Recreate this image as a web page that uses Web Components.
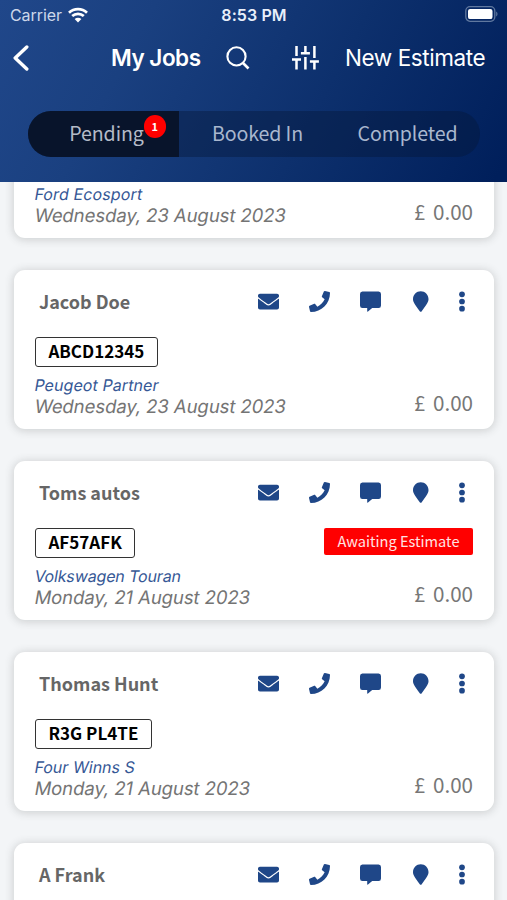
<!DOCTYPE html>
<html lang="en">
<head>
<meta charset="utf-8">
<title>My Jobs</title>
<style>
html, body { margin: 0; height: 900px; overflow: hidden; background: #f3f5f7; font-family: Inter, "Liberation Sans", sans-serif; }
</style>
</head>
<body>
<jobs-app></jobs-app>
<script>
const define = (name, html) => customElements.define(name, class extends HTMLElement {
  constructor() {
    super();
    const t = document.createElement('template');
    t.innerHTML = html;
    this.attachShadow({ mode: 'open' }).append(t.content.cloneNode(true));
  }
});

define('status-bar', `
<style>
:host { display: grid; grid-template-columns: 1fr auto 1fr; align-items: center; height: 29px; padding: 0 9px 0 10px; color: #fff; font-size: 16px; line-height: 30px; }
.left { display: flex; align-items: center; gap: 6.5px; color: #ccd7ea; letter-spacing: -.08px; }
.time { font-weight: 600; letter-spacing: .1px; color: #e8effa; }
.battery { justify-self: end; margin-top: -2px; }
svg { display: block; }
</style>
<div class="left"><span>Carrier</span>
<svg width="20" height="16" viewBox="0 0 20 16" fill="none" stroke="#fff" stroke-width="2.7"><path d="M1 5.7C6 .9 14 .9 19 5.7M4.2 9.1c3.3-3.1 8.3-3.1 11.6 0"/><path d="M6.6 12c2-1.8 4.8-1.8 6.8 0L10 15.4z" fill="#fff" stroke="none"/></svg></div>
<span class="time">8:53 PM</span>
<svg class="battery" width="33" height="16" viewBox="0 0 33 16"><rect x=".8" y=".7" width="29" height="14.6" rx="4.2" fill="none" stroke="#60789f" stroke-width="1.3"/><rect x="3" y="2.9" width="24.5" height="10.2" rx="2.2" fill="#fff"/><path d="M31.2 5.5c1.7.8 1.7 4.2 0 5z" fill="#60789f"/></svg>
`);

define('nav-bar', `
<style>
:host { display: grid; grid-template-columns: 111px 115px 66px 53px 1fr; align-items: center; height: 58px; color: #fff; line-height: 30px; white-space: nowrap; }
.back { margin-left: 11px; }
.title { font-size: 22.5px; font-weight: 600; letter-spacing: -.5px; }
.new { font-size: 22.5px; letter-spacing: -.42px; }
svg { display: block; fill: none; stroke: #fff; }
</style>
<svg class="back" width="18" height="28" viewBox="0 0 18 28" stroke-width="3.4" stroke-linecap="round" stroke-linejoin="round"><path d="M15.8 3 4.2 14l11.6 11"/></svg>
<span class="title">My Jobs</span>
<svg width="24" height="24" viewBox="0 0 24 24" stroke-width="2.1"><circle cx="10.5" cy="10.4" r="9.1"/><path d="m17 17 5.5 5.5" stroke-width="2.7"/></svg>
<svg width="27" height="24" viewBox="0 0 27 24" stroke-width="2.5"><path d="M4.5 0v10M0 13.6h9M4.500 13.6v10M13.4 0v7M8.9 7.3h9M13.4 11v12.6M22.4 0v12M17.9 15.6h9M22.4 15.6v8"/></svg>
<span class="new">New Estimate</span>
`);

define('job-tab', `
<style>
:host { display: flex; align-items: center; justify-content: center; position: relative; font: 400 19.6px/44px "Noto Sans CJK SC", sans-serif; color: #a9b7ce; padding-bottom: 3px; height: 43px; letter-spacing: -.12px; }
:host([active]) { background: #08142b; padding-left: 6px; color: #b4bbc7; }
::slotted([slot=badge]) { position: absolute; left: 115.5px; top: 4px; width: 22.5px; height: 22.5px; border-radius: 50%; background: #f00; color: #fff; text-align: center; font: 700 11px/22px "Noto Sans CJK SC", sans-serif; letter-spacing: 0; }
</style>
<slot></slot><slot name="badge"></slot>
`);

define('tab-strip', `
<style>
:host { display: grid; grid-template-columns: 151px 157px 143px; margin: 24px 0 0 28px; width: 452px; height: 46px; border-radius: 23px; overflow: hidden; background: rgba(4,22,55,.4); }
</style>
<slot></slot>
`);

define('app-header', `
<style>
:host { display: block; position: relative; z-index: 1; height: 181.5px; background: linear-gradient(118deg, #20478a 0%, #1a4080 26%, #0d306d 62%, #001f5b 98%); }
</style>
<slot></slot>
`);

define('reg-plate', `
<style>
:host { box-sizing: border-box; display: inline-block; height: 30px; padding: 0 12.4px; border: 1.5px solid #333; border-radius: 3px; color: #000; background: #fff; font: 700 17px/26px "Noto Sans CJK SC", sans-serif; white-space: nowrap; }
</style>
<slot></slot>
`);

define('status-tag', `
<style>
:host { display: block; box-sizing: border-box; width: 149px; height: 26.5px; border-radius: 2px; background: #f00; color: #ffe3e3; text-align: center; font: 400 14.6px/25px "Noto Sans CJK SC", sans-serif; }
</style>
<slot></slot>
`);

define('job-actions', `
<style>
:host { display: grid; grid-template-columns: repeat(5, auto); align-items: center; fill: #1f4788; height: 22px; }
svg { display: block; }
.mail { margin-right: 30px; } .call { margin-right: 30px; } .chat { margin-right: 32.5px; } .pin { margin-right: 30px; }
</style>
<svg class="mail" width="21" height="21" viewBox="0 0 512 512"><path d="M502.3 190.8c3.9-3.1 9.7-.2 9.7 4.7V400c0 26.5-21.5 48-48 48H48c-26.5 0-48-21.5-48-48V195.6c0-5 5.7-7.8 9.7-4.7 22.4 17.4 52.1 39.5 154.1 113.6 21.1 15.4 56.7 47.8 92.2 47.6 35.7.3 72-32.8 92.3-47.6 102-74.1 131.6-96.3 154-113.7zM256 320c23.2.4 56.6-29.2 73.4-41.4 132.7-96.3 142.8-104.7 173.4-128.7 5.8-4.5 9.2-11.5 9.2-18.9v-19c0-26.5-21.5-48-48-48H48c-26.5 0-48 21.5-48 48v19c0 7.4 3.4 14.3 9.2 18.9 30.6 23.9 40.7 32.4 173.4 128.7 16.8 12.2 50.2 41.8 73.4 41.4z"/></svg>
<svg class="call" width="21" height="21" viewBox="0 0 512 512"><path d="M493.4 24.6l-104-24c-11.3-2.6-22.9 3.3-27.5 13.9l-48 112c-4.2 9.8-1.4 21.3 6.9 28l60.6 49.6c-36 76.7-98.9 140.5-177.2 177.2l-49.6-60.6c-6.8-8.3-18.2-11.1-28-6.9l-112 48C3.9 366.5-2 378.1.6 389.4l24 104C27.1 504.2 36.7 512 48 512c256.1 0 464-207.5 464-464 0-11.2-7.7-20.9-18.6-23.4z"/></svg>
<svg class="chat" width="21" height="21" viewBox="0 0 21 21"><path d="M2.6.5h15.8A2.5 2.5 0 0 1 21 3v11.5a2.5 2.5 0 0 1-2.6 2.5H12.2L8 20.6c-.3.3-.8.1-.8-.4V17H2.6A2.5 2.5 0 0 1 0 14.5V3A2.5 2.5 0 0 1 2.6.5z"/></svg>
<svg class="pin" width="15.5" height="21" viewBox="0 0 384 512"><path d="M172.3 501.7C27 291 0 269.4 0 192 0 86 86 0 192 0s192 86 192 192c0 77.4-27 99-172.3 309.7-9.5 13.8-29.9 13.8-39.4 0z"/></svg>
<svg width="6" height="21" viewBox="0 0 6 21"><circle cx="3" cy="3.3" r="2.85"/><circle cx="3" cy="10.5" r="2.85"/><circle cx="3" cy="17.7" r="2.85"/></svg>
`);

/* Make and date are slanted upright glyphs, which keeps the two-storey "a". */
define('job-card', `
<style>
:host { display: block; box-sizing: border-box; height: 159px; padding: 21px 20.5px 0 21px; border-radius: 11px; background: #fff; box-shadow: 0 1px 9px 1px rgba(60,64,64,.2); color: #747474; white-space: nowrap; }
.head { display: flex; justify-content: space-between; height: 22px; padding: 0 8.3px 0 4px; }
.name { font: 700 18px/21px "Noto Sans CJK SC", sans-serif; color: #666; }
.reg { display: flex; justify-content: space-between; align-items: flex-start; height: 30.5px; margin-top: 24.5px; }
.foot { display: flex; justify-content: space-between; }
.make, .date { transform: skewX(-10deg); transform-origin: 0 70%; margin-left: -.7px; }
.make { font-size: 16px; line-height: 20px; color: #365896; margin-top: 7px; letter-spacing: var(--make-spacing, 0); }
.date { font-size: 18.5px; line-height: 23px; letter-spacing: -.07px; }
.price { font: 400 20.6px/26px "Noto Sans CJK SC", sans-serif; word-spacing: 3px; margin-top: 21px; color: #777; }
</style>
<div class="head"><span class="name"><slot name="name"></slot></span><job-actions></job-actions></div>
<div class="reg"><slot name="plate"></slot><slot name="status"></slot></div>
<div class="foot"><div><div class="make"><slot name="make"></slot></div><div class="date"><slot name="date"></slot></div></div><div class="price"><slot name="price"></slot></div></div>
`);

define('job-list', `
<style>
:host { display: grid; gap: 32px; margin: -102.9px 13.5px 0 14px; }
</style>
<slot></slot>
`);

const card = (name, plate, make, date, spacing, status = '') => `
<job-card style="--make-spacing:${spacing}px"><span slot="name">${name}</span><reg-plate slot="plate">${plate}</reg-plate>${status && `<status-tag slot="status">${status}</status-tag>`}
<span slot="make">${make}</span><span slot="date">${date}</span><span slot="price">£ 0.00</span></job-card>`;

/* The first card is scrolled mostly beneath the header; the last one runs off the bottom. */
define('jobs-app', `
<style>
:host { display: block; height: 900px; overflow: hidden; }
</style>
<app-header><status-bar></status-bar><nav-bar></nav-bar>
<tab-strip><job-tab active>Pending<span slot="badge">1</span></job-tab><job-tab>Booked In</job-tab><job-tab>Completed</job-tab></tab-strip></app-header>
<job-list>
<job-card style="--make-spacing:.13px"><span slot="make">Ford Ecosport</span><span slot="date">Wednesday, 23 August 2023</span><span slot="price">£ 0.00</span></job-card>
${card('Jacob Doe', 'ABCD12345', 'Peugeot Partner', 'Wednesday, 23 August 2023', .08)}
${card('Toms autos', 'AF57AFK', 'Volkswagen Touran', 'Monday, 21 August 2023', -.13, 'Awaiting Estimate')}
${card('Thomas Hunt', 'R3G PL4TE', 'Four Winns S', 'Monday, 21 August 2023', .03)}
<job-card><span slot="name">A Frank</span></job-card>
</job-list>
`);
</script>
</body>
</html>
